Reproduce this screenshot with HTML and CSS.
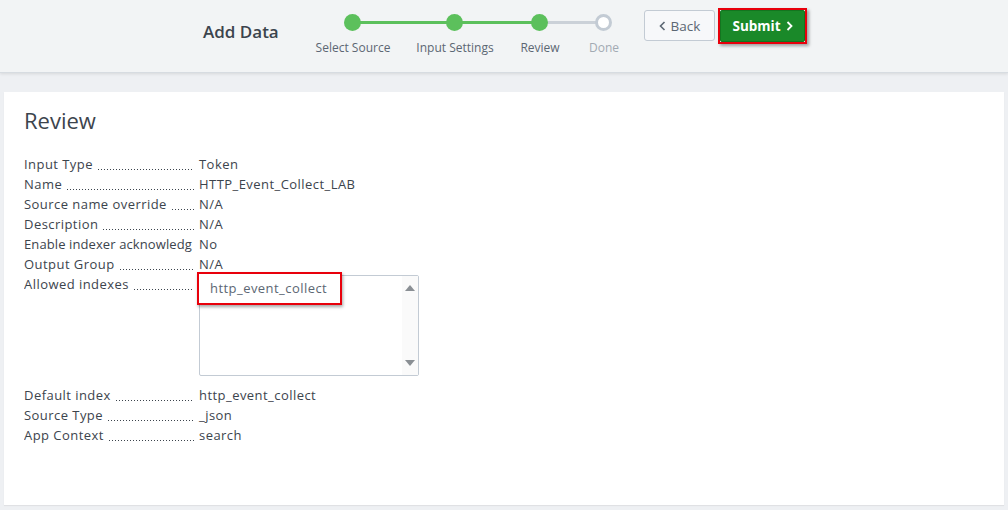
FILE: index.html
```html
<!DOCTYPE html>
<html>
<head>
<meta charset="utf-8">
<link rel="stylesheet" href="styles.css">
</head>
<body>
<header class="topbar">
  <div class="title">Add Data</div>
  <div class="steps">
    <div class="track">
      <span class="seg done s1"></span>
      <span class="seg done s2"></span>
      <span class="seg s3"></span>
      <span class="dot done d1"></span>
      <span class="dot done d2"></span>
      <span class="dot done d3"></span>
      <span class="dot empty d4"></span>
    </div>
    <div class="labels">
      <span class="lbl l1">Select Source</span>
      <span class="lbl l2">Input Settings</span>
      <span class="lbl l3">Review</span>
      <span class="lbl l4 muted">Done</span>
    </div>
  </div>
  <div class="buttons">
    <button class="btn back"><svg class="ico" width="7" height="10" viewBox="0 0 7 10"><path d="M5.5 1 L1.5 5 L5.5 9" fill="none" stroke="#5c6773" stroke-width="1.6"/></svg>Back</button>
    <div class="hl-btn"><button class="btn submit">Submit<svg class="ico r" width="7" height="10" viewBox="0 0 7 10"><path d="M1.5 1 L5.5 5 L1.5 9" fill="none" stroke="#fff" stroke-width="1.8"/></svg></button></div>
  </div>
</header>
<main class="page">
  <section class="panel">
    <h1 class="heading">Review</h1>
    <div class="rows">
      <div class="row"><span class="key"><span class="kt">Input Type</span><span class="dots"></span></span><span class="val">Token</span></div>
      <div class="row"><span class="key"><span class="kt">Name</span><span class="dots"></span></span><span class="val">HTTP_Event_Collect_LAB</span></div>
      <div class="row"><span class="key"><span class="kt">Source name override</span><span class="dots"></span></span><span class="val">N/A</span></div>
      <div class="row"><span class="key"><span class="kt">Description</span><span class="dots"></span></span><span class="val">N/A</span></div>
      <div class="row"><span class="key"><span class="kt tight">Enable indexer acknowledg</span></span><span class="val">No</span></div>
      <div class="row"><span class="key"><span class="kt">Output Group</span><span class="dots"></span></span><span class="val">N/A</span></div>
      <div class="row tall"><span class="key"><span class="kt">Allowed indexes</span><span class="dots"></span></span>
        <div class="listbox">
          <div class="item"><span class="hl-item">http_event_collect</span></div>
          <div class="scroll">
            <svg width="10" height="8" viewBox="0 0 10 8"><path d="M0 7 L5 1 L10 7 Z" fill="#8a8f94"/></svg>
            <svg width="10" height="8" viewBox="0 0 10 8"><path d="M0 1 L5 7 L10 1 Z" fill="#8a8f94"/></svg>
          </div>
        </div>
      </div>
      <div class="row"><span class="key"><span class="kt">Default index</span><span class="dots"></span></span><span class="val">http_event_collect</span></div>
      <div class="row"><span class="key"><span class="kt">Source Type</span><span class="dots"></span></span><span class="val">_json</span></div>
      <div class="row"><span class="key"><span class="kt">App Context</span><span class="dots"></span></span><span class="val">search</span></div>
    </div>
  </section>
</main>
</body>
</html>
```

FILE: styles.css
```css
* { box-sizing: border-box; }
html, body { margin: 0; padding: 0; }
body {
  width: 1008px;
  height: 510px;
  overflow: hidden;
  background: #eef0f3;
  font-family: "Open Sans", "Liberation Sans", sans-serif;
  color: #3c444d;
}
.topbar {
  height: 73px;
  background: #f2f4f5;
  border-bottom: 1px solid #d7dce1;
  box-shadow: 0 1px 3px rgba(0,0,0,0.10);
  display: flex;
  align-items: flex-start;
  position: relative;
}
.title {
  margin: 20px 0 0 203px;
  font-size: 17px;
  font-weight: 600;
  color: #3c444d;
  width: 110px;
}
.steps {
  margin-top: 14px;
  width: 320px;
  position: relative;
  height: 45px;
}
.track { position: relative; height: 18px; }
.seg {
  position: absolute;
  top: 7px;
  height: 3px;
  background: #cbd1d8;
}
.seg.done { background: #5cc05c; }
.s1 { left: 40px; width: 102px; }
.s2 { left: 142px; width: 85px; }
.s3 { left: 227px; width: 64px; }
.dot {
  position: absolute;
  top: 0;
  width: 17px;
  height: 17px;
  border-radius: 50%;
}
.dot.done { background: #5cc05c; }
.dot.empty { background: #fff; border: 3px solid #c3cbd4; }
.d1 { left: 31px; }
.d2 { left: 133px; }
.d3 { left: 218px; }
.d4 { left: 282px; }
.labels { position: relative; height: 20px; margin-top: 7px; }
.lbl {
  position: absolute;
  top: 0;
  font-size: 12px;
  color: #5c6773;
  transform: translateX(-50%);
  white-space: nowrap;
}
.lbl.muted { color: #a2aab3; }
.l1 { left: 40px; }
.l2 { left: 142px; }
.l3 { left: 227px; }
.l4 { left: 291px; }
.buttons {
  margin-top: 8px;
  margin-left: 11px;
  display: flex;
  align-items: flex-start;
  gap: 3px;
}
.btn {
  font-family: inherit;
  font-size: 13.5px;
  height: 31px;
  border-radius: 3px;
  cursor: pointer;
  display: flex;
  align-items: center;
  justify-content: center;
  gap: 5px;
}
.back {
  margin-top: 2px;
  width: 71px;
  background: #f7f8fa;
  border: 1px solid #c3cbd4;
  color: #5c6773;
}
.hl-btn {
  border: 2px solid #e8000b;
  padding: 0;
  box-shadow: 2px 2px 3px rgba(0,0,0,0.35);
}
.submit {
  width: 85px;
  height: 32px;
  background: #1a8929;
  border: 1px solid #13751f;
  color: #fff;
  font-weight: 700;
  border-radius: 2px;
}
.page { padding: 19px 4px 0 4px; }
.panel {
  background: #fff;
  height: 413px;
  padding: 12px 20px;
  box-shadow: 0 1px 1px rgba(0,0,0,0.06);
}
.heading {
  margin: 0 0 18px 0;
  font-size: 22px;
  font-weight: 400;
  line-height: 32px;
  color: #3c444d;
}
.rows { font-size: 13px; letter-spacing: 0.45px; }
.row {
  display: flex;
  height: 20px;
  line-height: 20px;
}
.row.tall { height: 111px; }
.key {
  width: 170px;
  margin-right: 5px;
  display: flex;
  flex: none;
  overflow: hidden;
}
.kt {
  white-space: nowrap;
  flex: 0 1 auto;
  min-width: 0;
}
.kt.tight { letter-spacing: 0.1px; }
.dots {
  flex: 1;
  min-width: 0;
  margin-left: 4px;
  height: 20px;
  background-image: radial-gradient(circle, #3c444d 0.75px, transparent 1px);
  background-size: 3px 3px;
  background-repeat: repeat-x;
  background-position: 0 14px;
}
.val { white-space: nowrap; }
.listbox {
  position: relative;
  margin-top: 1px;
  width: 220px;
  height: 101px;
  border: 1px solid #c3cbd4;
  border-radius: 2px;
  display: flex;
}
.item {
  flex: 1;
}
.hl-item {
  display: inline-block;
  margin: -4px 0 0 -3px;
  padding: 5px 13px 6px 11px;
  border: 2px solid #e8000b;
  box-shadow: 1px 2px 3px rgba(0,0,0,0.35);
  color: #5c6773;
  line-height: 18px;
  background: #fff;
}
.scroll {
  width: 16px;
  display: flex;
  flex-direction: column;
  justify-content: space-between;
  align-items: center;
  padding: 8px 0 8px 0;
  background: #fafafa;
}
```
